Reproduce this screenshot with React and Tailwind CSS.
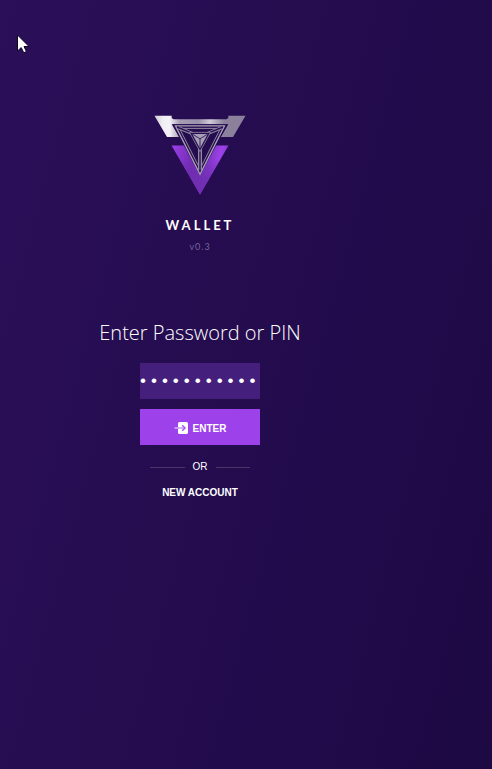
import { useState } from "react";

function Logo() {
  return (
    <svg viewBox="0 0 92 80" className="h-20 w-[92px]" role="img" aria-label="Wallet logo">
      <defs>
        <linearGradient id="silver" x1="0" y1="0" x2="92" y2="0" gradientUnits="userSpaceOnUse">
          <stop offset="0" stopColor="#cfcad8" />
          <stop offset="0.1" stopColor="#f1eff5" />
          <stop offset="0.17" stopColor="#f4f2f7" />
          <stop offset="0.28" stopColor="#a79db5" />
          <stop offset="0.48" stopColor="#9b90ab" />
          <stop offset="0.61" stopColor="#d0cbd8" />
          <stop offset="0.76" stopColor="#8b819d" />
          <stop offset="1" stopColor="#8a809c" />
        </linearGradient>
        <linearGradient id="violet" x1="18" y1="34" x2="74" y2="46" gradientUnits="userSpaceOnUse">
          <stop offset="0" stopColor="#9a3fe6" />
          <stop offset="0.4" stopColor="#6f2bae" />
          <stop offset="0.6" stopColor="#7730ba" />
          <stop offset="0.85" stopColor="#9d42ea" />
          <stop offset="1" stopColor="#8838cf" />
        </linearGradient>
        <linearGradient id="fade" x1="0" y1="44" x2="0" y2="79" gradientUnits="userSpaceOnUse">
          <stop offset="0" stopColor="#702eb2" stopOpacity="0" />
          <stop offset="0.6" stopColor="#702eb2" stopOpacity="0.9" />
          <stop offset="1" stopColor="#702eb2" />
        </linearGradient>
      </defs>
      <path d="M17.5 30.5H74.5L46 79.5Z" fill="url(#violet)" />
      <path d="M17.5 30.5H74.5L46 79.5Z" fill="url(#fade)" />
      <path
        d="M0.5 0.7H17.7V3L19.5 4.3H72.5L74.3 3V0.7H91.5L79 22H67L74.3 9.3H17.7L25 22H13Z"
        fill="url(#silver)"
      />
      <path d="M18.5 9.3H73.5L46 60.5Z" fill="#250c4f" />
      <path d="M21.5 10.9H70.5L46 59.3Z" fill="#250c4f" stroke="#aba2b9" strokeWidth="1.3" />
      <path d="M25.5 13.4H66.5L46 54Z" fill="none" stroke="#93899f" strokeWidth="1" />
      <path d="M24.5 12.8L39 18.8M67.5 12.8L53 18.8" stroke="#9389a3" strokeWidth="3.2" />
      <path d="M46 34V55" stroke="#9389a3" strokeWidth="4" />
      <path d="M23 12L39 18.6M69 12L53 18.6M46 34V56" stroke="#2b1256" strokeWidth="1.4" />
      <path d="M35.5 17.4H56.5L46 36.5Z" fill="#250c4f" stroke="#9389a3" strokeWidth="0.8" />
      <path d="M38.3 19H53.7L46 33.5Z" fill="#a79eb5" />
      <path d="M38.3 19L46 23.8L53.7 19M46 23.8V33.5" fill="none" stroke="#32195a" strokeWidth="0.9" />
    </svg>
  );
}

function EnterIcon() {
  return (
    <svg viewBox="0 0 14 12" className="h-3 w-3.5" aria-hidden="true">
      <path d="M0.5 6H4" stroke="#d6acf6" strokeWidth="1.6" />
      <rect x="4" width="10" height="12" rx="1.6" fill="#fff" />
      <path d="M4 6H10.5" stroke="#c48df2" strokeWidth="1.4" />
      <path d="M8.2 3.2L11 6L8.2 8.8" fill="none" stroke="#a856ea" strokeWidth="1.5" />
    </svg>
  );
}

function Pointer() {
  return (
    <svg viewBox="0 0 14 20" className="absolute left-4 top-[34px] h-5 w-3.5" aria-hidden="true">
      <path
        d="M1.5 1V17L5.2 13.6L7.8 18.8L10.4 17.5L8 12.5H13Z"
        fill="#fff"
        stroke="#100523"
        strokeWidth="1"
      />
    </svg>
  );
}

export default function App() {
  const [password, setPassword] = useState("correcthors");

  return (
    <div className="relative min-h-screen bg-[linear-gradient(105deg,#2b0f59_0%,#240c4e_50%,#1d0944_100%)] font-['Liberation_Sans',Arial,sans-serif] text-white">
      <Pointer />
      <main className="flex w-full max-w-[400px] flex-col items-center pt-[115px]">
        <Logo />
        <h1 className="mt-5 font-['Lato',sans-serif] text-[13px] leading-5 font-bold tracking-[3px]">
          WALLET
        </h1>
        <p className="mt-1 font-['Lato',sans-serif] text-[9px] leading-4 tracking-[1px] text-[#75649a]">
          v0.3
        </p>
        <form className="mt-16 flex flex-col items-center" onSubmit={(e) => e.preventDefault()}>
          <label
            htmlFor="password"
            className="font-['Open_Sans',sans-serif] text-xl leading-7 font-light"
          >
            Enter Password or PIN
          </label>
          <input
            id="password"
            type="password"
            value={password}
            onChange={(e) => setPassword(e.target.value)}
            className="mt-4 h-9 w-[120px] bg-[#44207c] text-[17px] tracking-[5px] text-white outline-none"
          />
          <button
            type="submit"
            className="mt-2.5 flex h-9 w-[120px] items-center justify-center gap-[5px] bg-[#9d41ea] pt-0.5 text-[10px] font-bold"
          >
            <EnterIcon />
            ENTER
          </button>
          <div className="mt-3.5 flex w-[100px] items-center gap-2 text-[10px] leading-4">
            <span className="h-px flex-1 bg-[#4a3468]" />
            OR
            <span className="h-px flex-1 bg-[#4a3468]" />
          </div>
          <button type="button" className="mt-2.5 text-[10px] leading-4 font-bold">
            NEW ACCOUNT
          </button>
        </form>
      </main>
    </div>
  );
}
